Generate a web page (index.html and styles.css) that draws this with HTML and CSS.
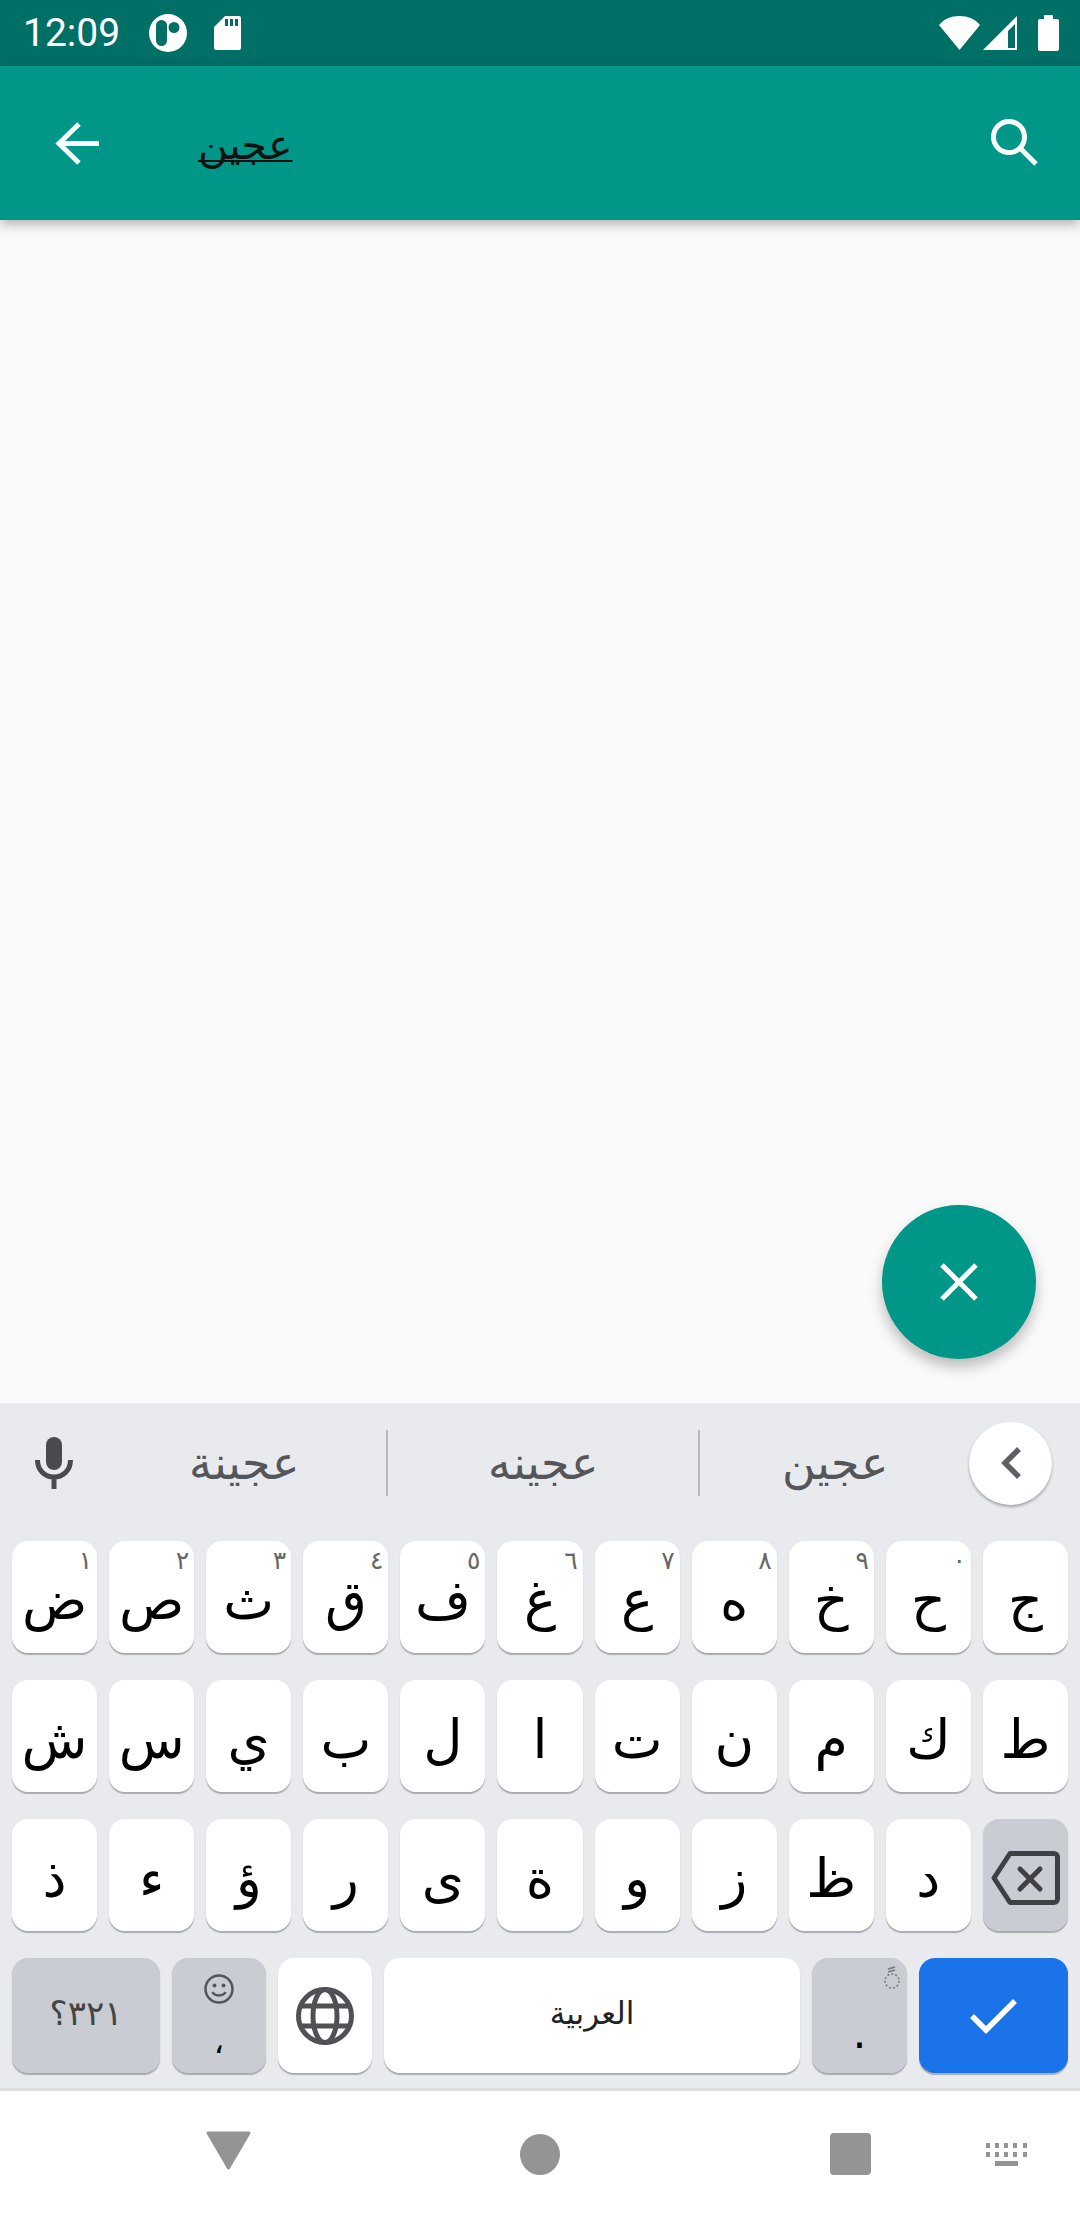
FILE: index.html
```html
<!DOCTYPE html>
<html lang="ar">
<head>
    <meta charset="UTF-8">
    <meta name="viewport" content="width=device-width, initial-scale=1.0">
    <title>بحث</title>
    <link rel="stylesheet" href="styles.css">
</head>
<body>
    <div class="screen">
        <div class="status-bar">
            <div class="status-left">
                <span class="clock">12:09</span>
                <svg class="ic-app" viewBox="0 0 38 38"><path fill="#fff" fill-rule="evenodd" d="M19 0a19 19 0 1 1 0 38a19 19 0 0 1 0-38zM12.500 6a5.500 5.500 0 0 0-5.500 5.500v15a5.500 5.500 0 0 0 11 0v-15a5.500 5.500 0 0 0-5.500-5.500zM25 8a5.500 5.500 0 1 0 0 11a5.500 5.500 0 0 0 0-11z"/></svg>
                <svg class="ic-sd" viewBox="0 0 27 34"><path fill="#fff" fill-rule="evenodd" d="M11 0h14a2 2 0 0 1 2 2v30a2 2 0 0 1-2 2H2a2 2 0 0 1-2-2V11zM11 3v7h3V3zM16 3v7h3V3zM21 3v7h3V3z"/></svg>
            </div>
            <div class="status-right">
                <svg class="ic-wifi" viewBox="0 0 41 34"><path fill="#fff" d="M20.500 34L0 9C5 3 12 0 20.500 0s15.500 3 20.500 9z"/></svg>
                <svg class="ic-signal" viewBox="0 0 35 34"><path fill="#fff" fill-rule="evenodd" d="M34 0v34H0zM32 8l-7 7v17h7z"/></svg>
                <svg class="ic-battery" viewBox="0 0 21 36"><path fill="#fff" d="M6 0h9v4h4a2 2 0 0 1 2 2v28a2 2 0 0 1-2 2H2a2 2 0 0 1-2-2V6a2 2 0 0 1 2-2h4z"/></svg>
            </div>
        </div>

        <header class="toolbar">
            <svg class="ic-back" viewBox="0 0 44 43"><path fill="none" stroke="#fff" stroke-width="5" d="M44 21.500H4M24 2L4 21.500L24 41"/></svg>
            <div class="query">عجين</div>
            <svg class="ic-search" viewBox="0 0 47 48"><circle cx="18" cy="18" r="15.500" fill="none" stroke="#fff" stroke-width="5"/><path fill="none" stroke="#fff" stroke-width="5" d="M29 29l16 16"/></svg>
        </header>

        <main class="content">
            <button class="fab">
                <svg viewBox="0 0 38 38"><path fill="none" stroke="#fff" stroke-width="5" d="M2 2l34 34M36 2L2 36"/></svg>
            </button>
        </main>

        <section class="keyboard">
            <div class="suggestions">
                <svg class="ic-mic" viewBox="0 0 38 52"><path fill="#4a4b50" d="M19 0a8 8 0 0 1 8 8v17a8 8 0 0 1-16 0V8a8 8 0 0 1 8-8z"/><path fill="none" stroke="#4a4b50" stroke-width="5" d="M2.500 23c0 10 7 17 16.500 17s16.500-7 16.500-17M19 40v12"/></svg>
                <div class="suggestion">عجينة</div>
                <div class="divider"></div>
                <div class="suggestion">عجينه</div>
                <div class="divider"></div>
                <div class="suggestion">عجين</div>
                <div class="collapse">
                    <svg viewBox="0 0 20 32"><path fill="none" stroke="#5f6064" stroke-width="5.500" d="M18 2L4 16l14 14"/></svg>
                </div>
            </div>

            <div class="keys">
                <div class="key-row">
                    <div class="key">ض<sup>١</sup></div>
                    <div class="key">ص<sup>٢</sup></div>
                    <div class="key">ث<sup>٣</sup></div>
                    <div class="key">ق<sup>٤</sup></div>
                    <div class="key">ف<sup>٥</sup></div>
                    <div class="key">غ<sup>٦</sup></div>
                    <div class="key">ع<sup>٧</sup></div>
                    <div class="key">ه<sup>٨</sup></div>
                    <div class="key">خ<sup>٩</sup></div>
                    <div class="key">ح<sup>٠</sup></div>
                    <div class="key">ج</div>
                </div>
                <div class="key-row">
                    <div class="key">ش</div>
                    <div class="key">س</div>
                    <div class="key">ي</div>
                    <div class="key">ب</div>
                    <div class="key">ل</div>
                    <div class="key">ا</div>
                    <div class="key">ت</div>
                    <div class="key">ن</div>
                    <div class="key">م</div>
                    <div class="key">ك</div>
                    <div class="key">ط</div>
                </div>
                <div class="key-row">
                    <div class="key">ذ</div>
                    <div class="key">ء</div>
                    <div class="key">ؤ</div>
                    <div class="key">ر</div>
                    <div class="key">ى</div>
                    <div class="key">ة</div>
                    <div class="key">و</div>
                    <div class="key">ز</div>
                    <div class="key">ظ</div>
                    <div class="key">د</div>
                    <div class="key key-dark">
                        <svg class="ic-del" viewBox="0 0 69 54"><path fill="none" stroke="#3f4044" stroke-width="5" stroke-linejoin="round" d="M19 2.500H63a3.500 3.500 0 0 1 3.500 3.500V48a3.500 3.500 0 0 1-3.500 3.500H19L3 27z"/><path fill="none" stroke="#3f4044" stroke-width="5" stroke-linecap="round" d="M29 18l20 20M49 18L29 38"/></svg>
                    </div>
                </div>
                <div class="key-row bottom-row">
                    <div class="key key-dark key-sym" dir="rtl">٣٢١؟</div>
                    <div class="key key-dark key-comma">
                        <svg class="ic-smile" viewBox="0 0 30 30"><circle cx="15" cy="15" r="13.500" fill="none" stroke="#55565a" stroke-width="2.500"/><circle cx="10.500" cy="11.500" r="2" fill="#55565a"/><circle cx="19.500" cy="11.500" r="2" fill="#55565a"/><path fill="none" stroke="#55565a" stroke-width="2.500" d="M8.500 18c2 4.500 11 4.500 13 0"/></svg>
                        <span>،</span>
                    </div>
                    <div class="key key-globe">
                        <svg viewBox="0 0 58 58"><g fill="none" stroke="#505154" stroke-width="5"><circle cx="29" cy="29" r="26.500"/><ellipse cx="29" cy="29" rx="12" ry="26.500"/><path d="M5 19h48M5 39h48"/></g></svg>
                    </div>
                    <div class="key key-space">العربية</div>
                    <div class="key key-dark key-dot">
                        <svg class="ic-mark" viewBox="0 0 20 28"><circle cx="10" cy="17" r="7" fill="none" stroke="#77787c" stroke-width="1.500" stroke-dasharray="2 2"/><path fill="none" stroke="#77787c" stroke-width="1.500" d="M6 5l7-2M6 8l7-2"/></svg>
                        <span>.</span>
                    </div>
                    <div class="key key-enter">
                        <svg viewBox="0 0 47 36"><path fill="none" stroke="#fff" stroke-width="5.500" d="M2 18l14 14L45 3"/></svg>
                    </div>
                </div>
            </div>
        </section>

        <nav class="nav-bar">
            <svg class="ic-nav-back" viewBox="0 0 45 39"><path fill="#949494" stroke="#949494" stroke-width="3" stroke-linejoin="round" d="M2 2h41L22.500 37z"/></svg>
            <div class="nav-home"></div>
            <div class="nav-recent"></div>
            <svg class="ic-nav-kbd" viewBox="0 0 41 23"><path fill="#949494" d="M0 0h4v5H0zM9 0h4v5H9zM18 0h4v5h-4zM27 0h4v5h-4zM37 0h4v5h-4zM0 9h4v5H0zM9 9h4v5H9zM18 9h4v5h-4zM27 9h4v5h-4zM37 9h4v5h-4zM9 18h23v5H9z"/></svg>
        </nav>
    </div>
</body>
</html>
```

FILE: styles.css
```css
* {
    margin: 0;
    padding: 0;
    box-sizing: border-box;
}

body {
    width: 1080px;
    height: 2220px;
    overflow: hidden;
    font-family: "DejaVu Sans", sans-serif;
    background-color: #fafafa;
}

.screen {
    display: flex;
    flex-direction: column;
    height: 2220px;
}

.status-bar {
    display: flex;
    justify-content: space-between;
    align-items: center;
    height: 66px;
    padding: 0 21px 0 23px;
    background-color: #006f65;
}

.status-left,
.status-right {
    display: flex;
    align-items: center;
}

.clock {
    font-family: Roboto, sans-serif;
    font-size: 39px;
    color: white;
    margin-right: 29px;
}

.ic-app {
    width: 38px;
    height: 38px;
    margin-right: 27px;
}

.ic-sd {
    width: 27px;
    height: 34px;
}

.ic-wifi {
    width: 41px;
    height: 34px;
    margin-right: 3px;
}

.ic-signal {
    width: 35px;
    height: 34px;
    margin-right: 20px;
}

.ic-battery {
    width: 21px;
    height: 36px;
}

.toolbar {
    position: relative;
    z-index: 2;
    display: flex;
    align-items: center;
    height: 154px;
    padding: 0 42px 0 55px;
    background-color: #009688;
    box-shadow: 0 4px 12px rgba(0, 0, 0, 0.3);
}

.ic-back {
    width: 44px;
    height: 43px;
}

.query {
    flex: 1;
    margin-left: 99px;
    padding-top: 4px;
    font-size: 41px;
    color: #111;
    text-decoration: underline;
    text-decoration-skip-ink: none;
    text-decoration-thickness: 2px;
    text-underline-offset: 1px;
}

.ic-search {
    width: 47px;
    height: 48px;
}

.content {
    flex: 1;
    display: flex;
    justify-content: flex-end;
    align-items: flex-end;
    padding: 0 44px 44px 0;
}

.fab {
    display: flex;
    justify-content: center;
    align-items: center;
    width: 154px;
    height: 154px;
    border: none;
    border-radius: 50%;
    background-color: #009688;
    box-shadow: 0 8px 14px rgba(0, 0, 0, 0.25);
}

.fab svg {
    width: 38px;
    height: 38px;
}

.keyboard {
    height: 688px;
    background-color: #e8eaed;
    border-bottom: 3px solid #dfe0e2;
}

.suggestions {
    display: grid;
    grid-template-columns: 67px 284px 2px 310px 2px 269px 83px;
    align-items: center;
    height: 120px;
    margin-bottom: 18px;
    padding-left: 35px;
}

.ic-mic {
    width: 38px;
    height: 52px;
}

.suggestion {
    text-align: center;
    font-family: "Liberation Serif", serif;
    font-size: 46px;
    color: #55565a;
}

.divider {
    height: 66px;
    background-color: #b8babd;
}

.collapse {
    display: flex;
    justify-content: center;
    align-items: center;
    width: 83px;
    height: 83px;
    border-radius: 50%;
    background-color: white;
    box-shadow: 0 2px 3px rgba(0, 0, 0, 0.3);
}

.collapse svg {
    width: 20px;
    height: 32px;
}

.keys {
    display: flex;
    flex-direction: column;
    gap: 27px;
    padding: 0 12px;
}

.key-row {
    display: flex;
    gap: 12px;
    height: 112px;
}

.key {
    position: relative;
    flex: 1;
    display: flex;
    justify-content: center;
    align-items: center;
    padding-top: 6px;
    border-radius: 16px;
    background-color: white;
    box-shadow: 0 2px 1px #a9abae;
    font-size: 54px;
    color: black;
}

.key sup {
    position: absolute;
    top: 7px;
    right: 5px;
    font-size: 25px;
    line-height: 1;
    color: #666;
}

.key-dark {
    background-color: #c9ccd3;
}

.ic-del {
    width: 69px;
    height: 54px;
}

.bottom-row {
    height: 115px;
}

.bottom-row .key {
    flex: none;
    padding-top: 0;
}

.bottom-row .key-sym {
    width: 148px;
    padding-bottom: 6px;
    font-size: 34px;
    color: #444;
}

.bottom-row .key-comma {
    width: 94px;
    flex-direction: column;
    justify-content: flex-start;
    padding-top: 16px;
    font-size: 32px;
    line-height: 1;
    color: black;
}

.key-comma span {
    margin-top: 22px;
}

.ic-smile {
    width: 30px;
    height: 30px;
}

.key-globe {
    width: 94px;
}

.key-globe svg {
    width: 58px;
    height: 58px;
}

.bottom-row .key-space {
    width: 416px;
    padding-bottom: 6px;
    font-size: 31px;
    color: #222;
}

.bottom-row .key-dot {
    width: 95px;
    padding-top: 34px;
    font-size: 44px;
}

.ic-mark {
    position: absolute;
    top: 6px;
    right: 5px;
    width: 20px;
    height: 28px;
}

.key-enter {
    width: 149px;
    background-color: #1a73e8;
}

.key-enter svg {
    width: 47px;
    height: 36px;
}

.nav-bar {
    flex: none;
    display: flex;
    align-items: center;
    height: 129px;
    padding: 0 0 3px 206px;
    background-color: white;
}

.ic-nav-back {
    width: 45px;
    height: 39px;
    margin-bottom: 7px;
}

.nav-home {
    width: 40px;
    height: 41px;
    margin-left: 269px;
    border-radius: 50%;
    background-color: #949494;
}

.nav-recent {
    width: 41px;
    height: 42px;
    margin-left: 270px;
    border-radius: 4px;
    background-color: #949494;
}

.ic-nav-kbd {
    width: 41px;
    height: 23px;
    margin-left: 115px;
}
```
